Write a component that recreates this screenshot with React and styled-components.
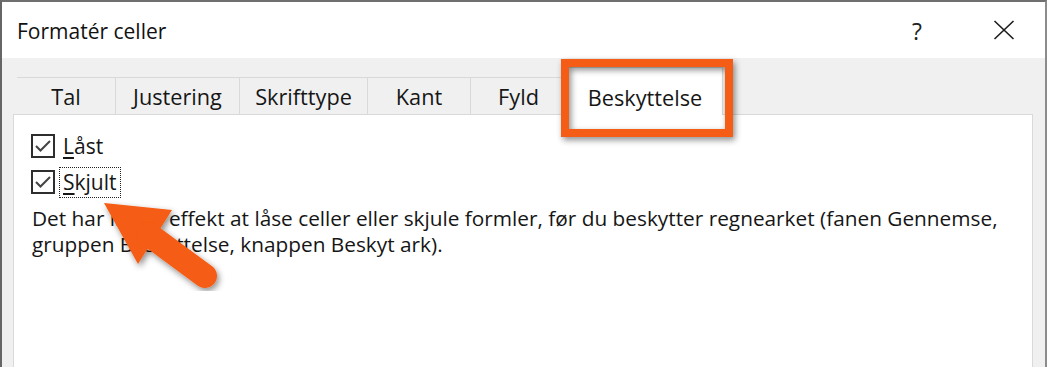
import React from "react";
import styled, { createGlobalStyle } from "styled-components";

const GlobalStyle = createGlobalStyle`
  html, body { margin: 0; padding: 0; background: #ffffff; }
  body { font-family: "Open Sans", "Noto Sans", "Liberation Sans", sans-serif; }
  * { box-sizing: border-box; }
`;

const Page = styled.div`
  position: relative;
  width: 1050px;
  height: 367px;
  overflow: hidden;
  background: #ffffff;
`;

const Window = styled.div`
  width: 1047px;
  height: 367px;
  display: flex;
  flex-direction: column;
  border-top: 2px solid #6f6f6f;
  border-left: 2px solid #666666;
  border-right: 2px solid #8c8c8c;
  background: #f0f0f0;
`;

const TitleBar = styled.div`
  height: 56px;
  flex: none;
  display: flex;
  align-items: center;
  background: #ffffff;
  padding-left: 15px;
`;

const Title = styled.div`
  flex: 1;
  font-size: 21px;
  font-weight: 500;
  color: #111;
  margin-top: 2px;
`;

const Help = styled.div`
  width: 12px;
  font-size: 23px;
  color: #222;
  margin-right: 69px;
  margin-top: 2px;
`;

const CloseButton = styled.div`
  width: 22px;
  height: 20px;
  margin-right: 30px;
  display: flex;
  align-items: center;
  justify-content: center;
`;

const Body = styled.div`
  flex: 1;
  display: flex;
  flex-direction: column;
  padding: 0 12px 0 11px;
`;

const TabStrip = styled.div`
  height: 56px;
  flex: none;
  display: flex;
  align-items: flex-end;
  padding-left: 4px;
`;

const Tab = styled.div`
  width: ${(p) => p.$w}px;
  height: ${(p) => (p.$active ? 48 : 37)}px;
  display: flex;
  align-items: center;
  justify-content: center;
  font-size: 21.7px;
  font-weight: 500;
  color: #161616;
  background: ${(p) => (p.$active ? "#ffffff" : "#f0f0f0")};
  border-top: 1px solid #d9d9d9;
  border-right: 1px solid #d9d9d9;
  border-left: ${(p) => (p.$active ? "1px solid #d9d9d9" : "none")};
  margin-bottom: ${(p) => (p.$active ? "-1px" : "0")};
  padding-top: ${(p) => (p.$active ? "11px" : "0")};
  position: relative;
  z-index: ${(p) => (p.$active ? 2 : 1)};
`;

const Panel = styled.div`
  flex: 1;
  background: #ffffff;
  border: 1px solid #d9d9d9;
  border-bottom: none;
  padding: 13px 0 0 17px;
  position: relative;
  z-index: 1;
`;

const CheckRow = styled.div`
  height: 36px;
  display: flex;
  align-items: center;
`;

const Box = styled.div`
  width: 24px;
  height: 24px;
  border: 2px solid #2e2e2e;
  background: #ffffff;
  display: flex;
  align-items: center;
  justify-content: center;
  margin-right: 4px;
`;

const Label = styled.span`
  font-size: 21px;
  font-weight: 500;
  color: #161616;
  padding: 1px 3px;
  border: 1px dotted ${(p) => (p.$focused ? "#222" : "transparent")};
  line-height: 27px;
`;

const Key = styled.span`
  text-decoration: underline;
  text-underline-offset: 3px;
`;

const Description = styled.p`
  margin: 5px 0 0 1px;
  font-size: 20.8px;
  font-weight: 500;
  line-height: 26px;
  color: #161616;
  white-space: nowrap;
`;

const Overlay = styled.svg`
  position: absolute;
  left: 0;
  top: 0;
  pointer-events: none;
  z-index: 10;
`;

const Check = () => (
  <svg width="18" height="16" viewBox="0 0 18 16">
    <polyline points="2,8 6.5,12.5 16,3" fill="none" stroke="#444" strokeWidth="2" />
  </svg>
);

const tabs = [
  { label: "Tal", w: 99 },
  { label: "Justering", w: 124 },
  { label: "Skrifttype", w: 128 },
  { label: "Kant", w: 103 },
  { label: "Fyld", w: 96 },
  { label: "Beskyttelse", w: 156, active: true },
];

export default function App() {
  return (
    <>
      <GlobalStyle />
      <Page>
        <Window>
          <TitleBar>
            <Title>Formatér celler</Title>
            <Help>?</Help>
            <CloseButton>
              <svg width="22" height="20" viewBox="0 0 22 20">
                <path d="M1.5 1 L20.5 19 M20.5 1 L1.5 19" stroke="#1c1c1c" strokeWidth="1.6" fill="none" />
              </svg>
            </CloseButton>
          </TitleBar>
          <Body>
            <TabStrip>
              {tabs.map((t) => (
                <Tab key={t.label} $w={t.w} $active={t.active}>
                  {t.label}
                </Tab>
              ))}
            </TabStrip>
            <Panel>
              <CheckRow>
                <Box>
                  <Check />
                </Box>
                <Label>
                  <Key>L</Key>åst
                </Label>
              </CheckRow>
              <CheckRow>
                <Box>
                  <Check />
                </Box>
                <Label $focused>
                  <Key>S</Key>kjult
                </Label>
              </CheckRow>
              <Description>
                Det har ingen effekt at låse celler eller skjule formler, før du beskytter regnearket (fanen Gennemse,
                <br />
                gruppen Beskyttelse, knappen Beskyt ark).
              </Description>
            </Panel>
          </Body>
        </Window>
        <Overlay width="1050" height="367" viewBox="0 0 1050 367">
          <defs>
            <filter id="sh" x="-20%" y="-20%" width="140%" height="140%">
              <feDropShadow dx="2" dy="3" stdDeviation="3" floodColor="#000" floodOpacity="0.45" />
            </filter>
          </defs>
          <rect x="565" y="63" width="164" height="70" fill="none" stroke="#f55b12" strokeWidth="8" filter="url(#sh)" />
          <g filter="url(#sh)" fill="#f55b12">
            <polygon points="104,203 172,210 138,264" />
            <line x1="148" y1="234" x2="205" y2="276" stroke="#f55b12" strokeWidth="24" strokeLinecap="round" />
          </g>
        </Overlay>
      </Page>
    </>
  );
}
